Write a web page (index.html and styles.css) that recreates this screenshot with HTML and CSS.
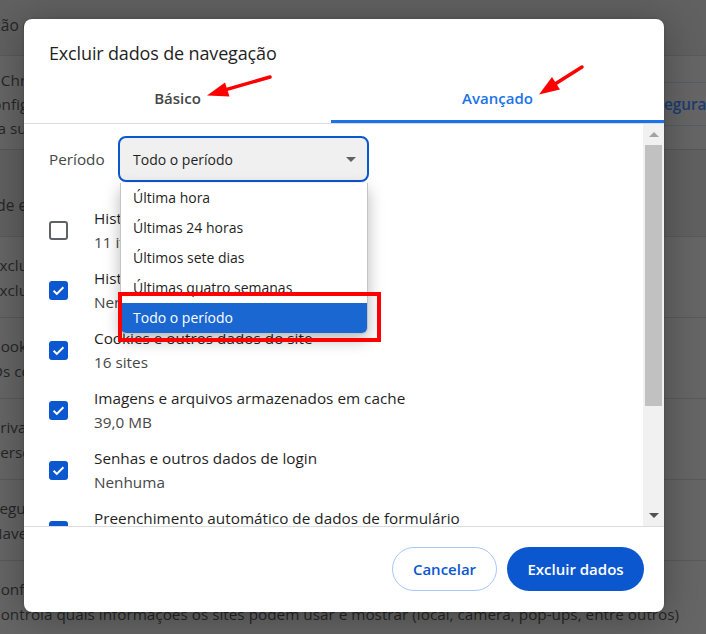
FILE: index.html
```html
<!DOCTYPE html>
<html lang="pt-BR">
<head>
<meta charset="utf-8">
<title>Excluir dados de navegação</title>
<link rel="stylesheet" href="styles.css">
</head>
<body>
<div class="page">
  <div class="sec-title sec-title-top">Verificação de segurança</div>
  <div class="card card-check">
    <div class="check-text">
      <div>O Chrome verifica regularmente</div>
      <div>configurações e extensões para</div>
      <div>e a sua segurança</div>
    </div>
    <div class="check-action"><span class="check-link">Assegurar</span></div>
  </div>
  <div class="sec-title sec-title-priv">Privacidade e segurança</div>
  <div class="card card-priv">
    <div class="prow"><div>Excluir dados de navegação</div><div>Exclui histórico, cookies, cache e mais</div></div>
    <div class="prow"><div>Cookies de terceiros</div><div>Os cookies de terceiros são bloqueados no modo de navegação anônima</div></div>
    <div class="prow"><div>Privacidade em anúncios</div><div>Personalize as informações usadas pelos sites para exibir anúncios</div></div>
    <div class="prow"><div>Segurança</div><div>Navegação segura (proteção contra sites perigosos) e outras configurações</div></div>
    <div class="prow"><div>Configurações do site</div><div>Controla quais informações os sites podem usar e mostrar (local, câmera, pop-ups, entre outros)</div></div>
  </div>
</div>

<div class="dialog">
  <h1 class="dlg-title">Excluir dados de navegação</h1>
  <div class="tabs">
    <div class="tab">Básico</div>
    <div class="tab tab-active">Avançado</div>
  </div>
  <div class="dlg-body">
    <div class="scroll-content">
      <div class="period-row">
        <span class="period-label">Período</span>
        <div class="select"><span>Todo o período</span><span class="select-arrow"></span></div>
      </div>
      <div class="opts">
        <div class="opt"><span class="cb"></span><div class="opt-text"><div class="opt-title">Histórico de navegação</div><div class="opt-sub">11 itens</div></div></div>
        <div class="opt"><span class="cb cb-on"><svg viewBox="0 0 19 19"><path d="M4.6 9.8l3.2 3.1 6.6-6.6"/></svg></span><div class="opt-text"><div class="opt-title">Histórico de downloads</div><div class="opt-sub">Nenhum</div></div></div>
        <div class="opt"><span class="cb cb-on"><svg viewBox="0 0 19 19"><path d="M4.6 9.8l3.2 3.1 6.6-6.6"/></svg></span><div class="opt-text"><div class="opt-title">Cookies e outros dados do site</div><div class="opt-sub">16 sites</div></div></div>
        <div class="opt"><span class="cb cb-on"><svg viewBox="0 0 19 19"><path d="M4.6 9.8l3.2 3.1 6.6-6.6"/></svg></span><div class="opt-text"><div class="opt-title">Imagens e arquivos armazenados em cache</div><div class="opt-sub">39,0 MB</div></div></div>
        <div class="opt"><span class="cb cb-on"><svg viewBox="0 0 19 19"><path d="M4.6 9.8l3.2 3.1 6.6-6.6"/></svg></span><div class="opt-text"><div class="opt-title">Senhas e outros dados de login</div><div class="opt-sub">Nenhuma</div></div></div>
        <div class="opt"><span class="cb cb-on"><svg viewBox="0 0 19 19"><path d="M4.6 9.8l3.2 3.1 6.6-6.6"/></svg></span><div class="opt-text"><div class="opt-title">Preenchimento automático de dados de formulário</div><div class="opt-sub">Nenhum</div></div></div>
      </div>
      <ul class="dropdown">
        <li>Última hora</li>
        <li>Últimas 24 horas</li>
        <li>Últimos sete dias</li>
        <li>Últimas quatro semanas</li>
        <li class="dd-selected">Todo o período</li>
      </ul>
    </div>
    <div class="scrollbar">
      <div class="sb-btn"><span class="sb-up"></span></div>
      <div class="sb-track"><div class="sb-thumb"></div></div>
      <div class="sb-btn"><span class="sb-down"></span></div>
    </div>
  </div>
  <div class="dlg-footer">
    <button class="btn btn-outline">Cancelar</button>
    <button class="btn btn-primary">Excluir dados</button>
  </div>
</div>

<div class="annot-box"></div>
<svg class="annot-arrows" width="706" height="634" viewBox="0 0 706 634">
  <line x1="270" y1="77" x2="226" y2="89.6"/>
  <polygon points="207,95.5 229.5,96.5 225,82.5"/>
  <line x1="582" y1="67" x2="555" y2="84"/>
  <polygon points="539,94.5 560,89.5 552,77"/>
</svg>
</body>
</html>
```

FILE: styles.css
```css
* { box-sizing: border-box; }

html, body {
  margin: 0;
  padding: 0;
}

body {
  width: 706px;
  height: 634px;
  overflow: hidden;
  position: relative;
  background: #616161;
  font-family: "Open Sans", "Noto Sans", sans-serif;
  color: #262626;
}

/* ---------- background settings page (dimmed) ---------- */
.page {
  margin-left: -9px;
  width: 760px;
  font-size: 15.3px;
  line-height: 24px;
}

.sec-title {
  color: #262626;
  font-size: 15.5px;
}

.sec-title-top {
  height: 55px;
  padding-top: 13px;
  margin-left: -51px;
}

.card {
  background: #666666;
}

.card-check {
  height: 95px;
  border-top: 1px solid #5a5a5a;
  border-bottom: 1px solid #585858;
  display: flex;
}

.check-text {
  margin-left: -6px;
  padding-top: 12px;
  color: #262626;
}

.check-action {
  margin-left: auto;
  width: 120px;
  margin-top: 26px;
  height: 44px;
  border-top: 1px solid #575d66;
  border-bottom: 1px solid #575d66;
  display: flex;
  align-items: center;
  padding-left: 8px;
}

.check-link {
  color: #1d3c70;
  font-weight: 600;
}

.sec-title-priv {
  height: 86px;
  padding-top: 43px;
  margin-left: -60px;
}

.card-priv {
  border-top: 1px solid #5a5a5a;
}

.prow {
  height: 81px;
  padding-top: 16px;
  line-height: 25px;
  border-bottom: 1px solid #5a5a5a;
  white-space: nowrap;
  color: #262626;
}

/* ---------- dialog ---------- */
.dialog {
  position: absolute;
  left: 24px;
  top: 19px;
  width: 640px;
  height: 593px;
  background: #ffffff;
  border-radius: 8px;
  overflow: hidden;
  display: flex;
  flex-direction: column;
  box-shadow: 0 6px 40px rgba(0, 0, 0, 0.32), 0 0 3px rgba(0, 0, 0, 0.2);
}

.dlg-title {
  margin: 0;
  padding: 22px 25px 0;
  height: 47px;
  font-size: 18px;
  font-weight: 400;
  line-height: 24px;
  letter-spacing: -0.15px;
  color: #1f1f1f;
}

.tabs {
  display: grid;
  grid-template-columns: 307px 1fr;
  border-bottom: 1px solid #dadce0;
}

.tab {
  text-align: center;
  padding: 22px 0 12px;
  line-height: 20px;
  font-size: 15px;
  font-weight: 600;
  color: #444746;
  border-bottom: 3px solid transparent;
}

.tab-active {
  color: #1a73e8;
  border-bottom-color: #1a73e8;
}

.dlg-body {
  height: 402px;
  display: flex;
}

.scroll-content {
  flex: 1;
  position: relative;
  overflow: hidden;
  padding: 12px 0 0 25px;
}

.period-row {
  display: flex;
  align-items: center;
  height: 46px;
}

.period-label {
  width: 69px;
  flex-shrink: 0;
  font-size: 15.3px;
  color: #444746;
}

.select {
  width: 251px;
  height: 46px;
  border: 2px solid #0b57d0;
  border-radius: 8px;
  background: #f0f0f0;
  display: flex;
  align-items: center;
  padding-left: 13px;
  font-size: 14px;
  color: #1f1f1f;
}

.select-arrow {
  margin-left: auto;
  margin-right: 11px;
  width: 0;
  height: 0;
  border-left: 5px solid transparent;
  border-right: 5px solid transparent;
  border-top: 5px solid #5f6368;
}

.opts {
  margin-top: 18px;
}

.opt {
  display: flex;
  align-items: center;
  height: 60px;
}

.cb {
  width: 19px;
  height: 19px;
  flex-shrink: 0;
  margin-right: 26px;
  border: 2px solid #5f6368;
  border-radius: 3px;
  display: flex;
}

.cb-on {
  border: none;
  background: #0b57d0;
}

.cb svg {
  width: 19px;
  height: 19px;
  fill: none;
  stroke: #ffffff;
  stroke-width: 2;
}

.opt-text {
  font-size: 15.3px;
  line-height: 24px;
  white-space: nowrap;
}

.opt-title {
  color: #1f1f1f;
}

.opt-sub {
  color: #474747;
}

.dropdown {
  position: absolute;
  left: 96px;
  top: 59px;
  width: 248px;
  margin: 0;
  padding: 0;
  list-style: none;
  background: #ffffff;
  border: 1px solid #c4c4c4;
  border-top: none;
  border-radius: 0 0 6px 6px;
  overflow: hidden;
  box-shadow: 0 6px 16px rgba(0, 0, 0, 0.28);
}

.dropdown li {
  height: 30px;
  line-height: 30px;
  padding-left: 12px;
  font-size: 14px;
  color: #1f1f1f;
}

.dropdown .dd-selected {
  background: #1a67d2;
  color: #ffffff;
}

.scrollbar {
  width: 21px;
  background: #f1f1f1;
  display: flex;
  flex-direction: column;
}

.sb-btn {
  height: 21px;
  display: flex;
  align-items: center;
  justify-content: center;
}

.sb-up {
  width: 0;
  height: 0;
  border-left: 5px solid transparent;
  border-right: 5px solid transparent;
  border-bottom: 5px solid #a3a3a3;
}

.sb-down {
  width: 0;
  height: 0;
  border-left: 5px solid transparent;
  border-right: 5px solid transparent;
  border-top: 5px solid #505050;
}

.sb-track {
  flex: 1;
  padding: 0 2px;
}

.sb-thumb {
  height: 261px;
  background: #c1c1c1;
}

.dlg-footer {
  border-top: 1px solid #dadce0;
  flex: 1;
  display: flex;
  justify-content: flex-end;
  align-items: flex-start;
  gap: 10px;
  padding: 20px 20px 0;
}

.btn {
  height: 44px;
  border-radius: 22px;
  font-family: "Open Sans", "Noto Sans", sans-serif;
  font-size: 15px;
  font-weight: 600;
  padding: 0 0 1px;
}

.btn-outline {
  width: 105px;
  background: #ffffff;
  border: 1px solid #a8c7fa;
  color: #0b57d0;
}

.btn-primary {
  width: 137px;
  background: #0b57d0;
  border: none;
  color: #ffffff;
}

/* ---------- annotations ---------- */
.annot-box {
  position: absolute;
  left: 118px;
  top: 292px;
  width: 263px;
  height: 50px;
  border: 4px solid #ff0000;
}

.annot-arrows {
  position: absolute;
  left: 0;
  top: 0;
}

.annot-arrows line {
  stroke: #ff0000;
  stroke-width: 3.5;
  stroke-linecap: round;
}

.annot-arrows polygon {
  fill: #ff0000;
}
```
